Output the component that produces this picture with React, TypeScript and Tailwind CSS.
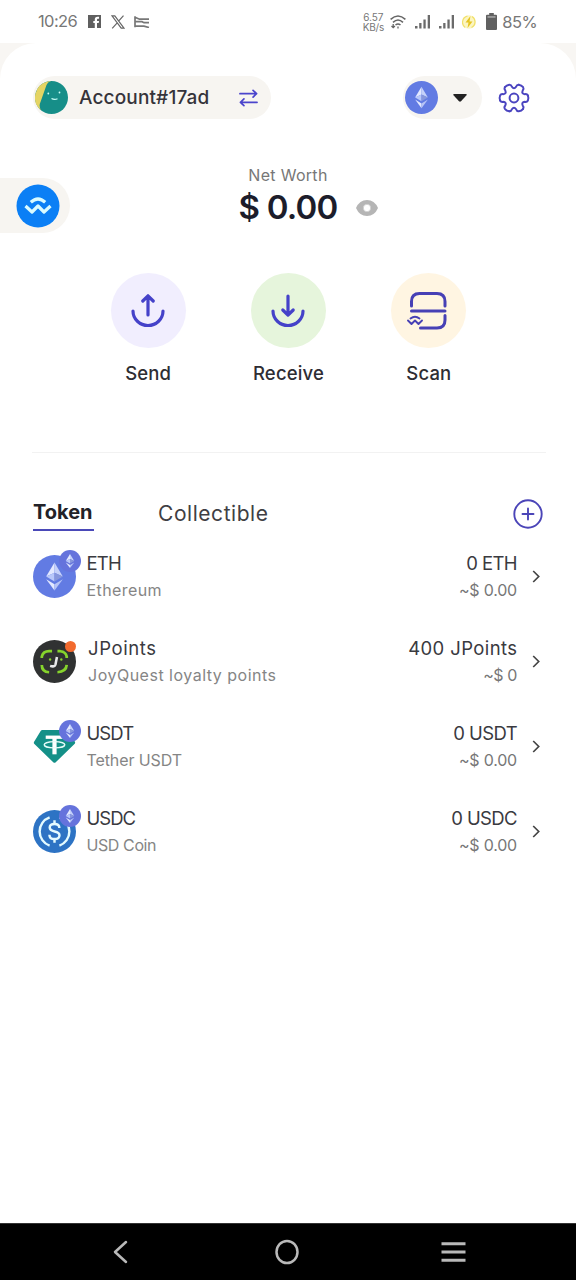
import React from 'react';

interface Token {
  symbol: string;
  name: string;
  amount: string;
  value: string;
  icon: React.ReactNode;
  textClass: string;
  symbolClass: string;
  nameClass: string;
  amountClass: string;
  valueClass: string;
}

// Ethereum diamond, drawn around 0,0 and about 32 units high
const EthDiamond = () => (
  <g>
    <path d="M0-15.500-9.300 0 0-4.200z" fill="#e3e9ff" />
    <path d="M0-15.500 9.300 0 0-4.200z" fill="#c5d1fa" />
    <path d="M-9.300 0 0-4.200V5.600z" fill="#b9c8fa" />
    <path d="M9.300 0 0-4.200V5.600z" fill="#8797dc" />
    <path d="M-9.300 3 0 8.600V15.500z" fill="#e3e9ff" />
    <path d="M9.300 3 0 8.600V15.500z" fill="#b7c4f6" />
  </g>
);

const EthCircle = ({ className, fill = '#627be3' }: { className: string; fill?: string }) => (
  <svg viewBox="-24 -24 48 48" className={className}>
    <circle r="24" fill={fill} />
    <EthDiamond />
  </svg>
);

const EthBadge = () => (
  <EthCircle className="absolute left-[26px] -top-[5px] w-[22px] h-[22px]" fill="#6573dc" />
);

const EthIcon = () => (
  <>
    <EthCircle className="w-[43px] h-[43px]" />
    <EthBadge />
  </>
);

const JPointsIcon = () => (
  <>
    <svg viewBox="0 0 44 44" className="w-[43px] h-[43px]">
      <circle cx="22" cy="22" r="22" fill="#303232" />
      <g fill="none" stroke="#86d42c" strokeWidth="2.800">
        <path d="M9 18.500v-1.500q1.500-5.500 7.500-5.500h3" />
        <path d="M25 11.500h3q5.500.5 6.500 5.500v1.500" />
        <path d="M9 25.500q0 7 7.500 7.500" />
        <path d="M34.500 25.500q-.5 7-9.500 7.500" />
      </g>
      <circle cx="17.500" cy="20" r="1.200" fill="#86d42c" />
      <circle cx="29" cy="20" r="1.200" fill="#86d42c" />
      <path d="M24.500 17.500 23 25q-.7 3-5.500 1.500" fill="none" stroke="#e8e8ea" strokeWidth="2.600" />
    </svg>
    <span className="absolute left-[32px] top-px w-[11px] h-[11px] rounded-full bg-[#f26a2e]" />
  </>
);

const UsdtIcon = () => (
  <>
    <svg viewBox="0 0 44 44" className="w-[43px] h-[43px]">
      <path d="M9.500 5h25q1 0 1.500 1l7 11.500q.5 1-.3 1.800L23 38.300q-1 .9-2 0L1.200 19.300Q.5 18.500 1 17.500L8 6q.5-1 1.500-1z" fill="#149088" />
      <path d="M13 12.500h18" stroke="#fff" strokeWidth="3.400" />
      <path d="M22 12.500v17.500" stroke="#fff" strokeWidth="4.300" />
      <ellipse cx="22" cy="20.200" rx="10.500" ry="3.200" fill="none" stroke="#e6fbf8" strokeWidth="1.500" />
    </svg>
    <EthBadge />
  </>
);

const UsdcIcon = () => (
  <>
    <svg viewBox="0 0 44 44" className="w-[43px] h-[43px]">
      <circle cx="22" cy="22" r="22" fill="#2d73c4" />
      <g fill="none" stroke="#e4fbff" strokeWidth="2.500">
        <path d="M17 7.500A15.400 15.400 0 0 0 17 36.500" />
        <path d="M27 7.500A15.400 15.400 0 0 1 27 36.500" />
        <path d="M27 18.500c0-3-2-4.200-5-4.200s-4.900 1.300-4.900 3.700c0 5.600 10 2.300 10 7.800 0 2.500-2.100 3.900-5.100 3.900s-5.200-1.400-5.200-4.500" />
        <path d="M22 10.500v4M22 29.500v4" />
      </g>
    </svg>
    <EthBadge />
  </>
);

const tokens: Token[] = [
  {
    symbol: 'ETH', name: 'Ethereum', amount: '0 ETH', value: '~$ 0.00', icon: <EthIcon />,
    textClass: 'pl-[10.500px]', symbolClass: 'tracking-[-0.8px]', nameClass: 'tracking-[0.4px]',
    amountClass: 'tracking-[-0.6px]', valueClass: 'tracking-[-0.2px]',
  },
  {
    symbol: 'JPoints', name: 'JoyQuest loyalty points', amount: '400 JPoints', value: '~$ 0', icon: <JPointsIcon />,
    textClass: 'pl-[12px]', symbolClass: 'tracking-[0.6px]', nameClass: 'tracking-[0.5px]',
    amountClass: 'tracking-[0.4px] -mr-[0.500px]', valueClass: 'tracking-[-0.4px]',
  },
  {
    symbol: 'USDT', name: 'Tether USDT', amount: '0 USDT', value: '~$ 0.00', icon: <UsdtIcon />,
    textClass: 'pl-[10.500px]', symbolClass: 'tracking-[-0.9px]', nameClass: 'tracking-[-0.1px]',
    amountClass: 'tracking-[-0.6px]', valueClass: 'tracking-[-0.2px]',
  },
  {
    symbol: 'USDC', name: 'USD Coin', amount: '0 USDC', value: '~$ 0.00', icon: <UsdcIcon />,
    textClass: 'pl-[10.500px]', symbolClass: 'tracking-[-1px]', nameClass: 'tracking-[-0.4px]',
    amountClass: 'tracking-[-0.6px]', valueClass: 'tracking-[-0.2px]',
  },
];

const Signal = ({ className }: { className: string }) => (
  <svg viewBox="0 0 16 14" className={className} fill="#6b6b6b">
    <path d="M0 11h2.500v2.500H0zM4.200 8h2.300v5.500H4.200zM8.400 4.500h2.300v9H8.400zM12.700 0H15v13.500h-2.300z" />
  </svg>
);

const StatusBar = () => (
  <div className="h-[43px] flex items-center pl-[38px] pr-[39px] text-[#777] bg-white">
    <span className="text-[16.500px] leading-none tracking-[-0.6px] w-[50px]">10:26</span>
    <svg viewBox="0 0 14 14" className="w-[13px] h-[13px]">
      <path d="M0 0h14v14H9.700V8.700h1.800l.4-2.200H9.700V5.200c0-.8.3-1.200 1.200-1.200h1V2h-1.700C8.200 2 7.300 3.200 7.300 5v1.500H5.700v2.200h1.600V14H0z" fill="#5f5f5f" />
    </svg>
    <svg viewBox="0 0 14 14" className="ml-[10px] w-[14px] h-[14px]" fill="none" stroke="#666" strokeWidth="1.200">
      <path d="M1 .8h2.800l9.200 12.400h-2.800zM12.500.6 7.800 5.800M6 8.200 1.200 13.400" />
    </svg>
    <svg viewBox="0 0 16 12" className="ml-[9px] w-[16px] h-[12px]" fill="none" stroke="#777" strokeWidth="1.700">
      <path d="M1 .3v11M1 1.200l4.500 2H15M1 5.700h7l2 1h5M1 10.200h9l5 1.300" />
    </svg>
    <div className="ml-auto flex items-center">
      <div className="w-[22px] text-[10px] leading-[10px] text-center">
        <div>6.57</div>
        <div className="tracking-[-0.2px]">KB/s</div>
      </div>
      <svg viewBox="0 0 16 14" className="ml-[6px] w-[16px] h-[14px]" fill="none" stroke="#666" strokeWidth="1.600">
        <path d="M.6 4.300Q8-2.300 15.400 4.300M3 7.300Q8 2.700 13 7.300M5.500 10Q8 8 10.500 10" />
        <path d="M8 11.400v2M3.200 9v3.500M1.500 11l1.700 1.700L4.900 11" strokeWidth="1.300" />
      </svg>
      <Signal className="ml-[9px] w-[16px] h-[14px]" />
      <Signal className="ml-[8px] w-[16px] h-[14px]" />
      <svg viewBox="0 0 14 14" className="ml-[7px] w-[14px] h-[14px]">
        <circle cx="7" cy="7" r="6.800" fill="#fbf5c2" />
        <path d="M3.200 12.500A6.300 6.300 0 0 1 5.500 1.200M10 1.500A6.300 6.300 0 0 1 9.500 12.500" fill="none" stroke="#f1e06a" strokeWidth="1.200" />
        <path d="M8.500 1 3.500 7.600h3L5.500 13l5-6.600h-3z" fill="#e6c420" />
      </svg>
      <svg viewBox="0 0 11 17" className="ml-[10px] w-[11px] h-[17px]" fill="#606060">
        <path d="M3.200 0h4.600v1.700H10q1 0 1 1V16q0 1-1 1H1q-1 0-1-1V2.700q0-1 1-1h2.200z" />
        <path d="M1.500 3.200h8v1.500h-8z" fill="#aaa" />
      </svg>
      <span className="ml-[5px] text-[16.500px] leading-[17px] pt-px tracking-[-0.6px]">85%</span>
    </div>
  </div>
);

// Six identical teeth, one path per 60 degrees
const Gear = () => (
  <svg viewBox="-16 -16 32 32" className="ml-[16px] w-[32px] h-[32px]" fill="none" stroke="#4b45c0" strokeWidth="2" strokeLinecap="round">
    {[0, 60, 120, 180, 240, 300].map((angle) => (
      <path
        key={angle}
        transform={`rotate(${angle})`}
        d="M13.900-2.500Q14.900 0 13.900 2.500Q13 4.300 10.800 3.800Q7.200 4.150 8.690 7.450Q10.220 9.110 9.120 10.790"
      />
    ))}
    <circle r="4.400" />
  </svg>
);

const Header = () => (
  <div className="flex items-center h-[43px] mt-[33px] ml-[33px]">
    <div className="flex items-center w-[238px] h-[43px] rounded-full bg-[#f7f5f1] pl-[2px]">
      <svg viewBox="0 0 33 33" className="w-[33px] h-[33px]">
        <circle cx="16.500" cy="16.500" r="16.500" fill="#168e88" />
        <path d="M12.500.5A16.500 16.500 0 0 0 6 29.200Q3.500 25 5.500 21L11.500 4Q12.500 1 16 0z" fill="#e5d463" />
        <circle cx="13.300" cy="12.500" r=".9" fill="#c9fff8" />
        <circle cx="24.500" cy="11.500" r=".9" fill="#c9fff8" />
        <path d="M16.500 17.500q3 1.700 6 .2" fill="none" stroke="#c9fff8" strokeWidth="1.200" />
      </svg>
      <span className="ml-[11px] w-[160px] text-[19px] font-medium leading-none tracking-[0.15px] text-[#35333a] whitespace-nowrap">Account#17ad</span>
      <svg viewBox="0 0 20 18" className="w-[19px] h-[18px]" fill="none" stroke="#4b45cc" strokeWidth="1.800" strokeLinecap="round" strokeLinejoin="round">
        <path d="M1 4.500h17M14.800 1 18.500 4.500 14.800 8M19 13.500H1.500M5.200 10 1.500 13.500 5.200 17" />
      </svg>
    </div>
    <div className="flex items-center ml-[132px] w-[79px] h-[43px] rounded-full bg-[#f7f5f1] pl-[2px]">
      <EthCircle className="w-[33px] h-[33px]" />
      <svg viewBox="0 0 14 8" className="ml-[15px] w-[14px] h-[8px]" fill="#222">
        <path d="M1 0h12q1.300.5.300 1.600L8 7.300q-1 .9-2 0L.7 1.600Q-.3.500 1 0z" />
      </svg>
    </div>
    <Gear />
  </div>
);

const NetWorth = () => (
  <div className="grid grid-cols-[1fr_120px_1fr] h-[154px]">
    <div className="mt-[59px] flex items-center justify-end pr-[10px] w-[70px] h-[55px] rounded-r-full bg-[#f7f5f1]">
      <svg viewBox="0 0 44 44" className="w-[44px] h-[44px]">
        <circle cx="22" cy="22" r="21.500" fill="#0b7ff5" />
        <path d="M9.500 22 16 28 22 22 28 28 34.500 22M14.800 18.300Q22 11.700 29.200 18.300" fill="none" stroke="#d9fbff" strokeWidth="3.200" strokeLinejoin="round" />
      </svg>
    </div>
    <div className="flex flex-col items-center whitespace-nowrap">
      <div className="mt-[46px] text-[16px] leading-[20px] tracking-[0.3px] text-[#777]">Net Worth</div>
      <div className="mt-[4px] text-[33px] leading-[36px] tracking-[-0.8px] word-spacing font-semibold text-[#1c1d2b]">$ 0.00</div>
    </div>
    <svg viewBox="0 0 22 16" className="mt-[81px] ml-[8px] w-[22px] h-[16px]">
      <path d="M0 8Q3.500 0 11 0t11 8q-3.500 8-11 8T0 8z" fill="#b5b5b5" />
      <circle cx="11" cy="8" r="3.700" fill="#fff" stroke="#c5c5c5" strokeWidth=".6" />
    </svg>
  </div>
);

const Actions = () => (
  <div className="grid grid-cols-3 w-[421px] ml-[78px] h-[179px] text-center text-[18.500px] leading-[24px] tracking-[0.15px] font-medium text-[#2e2d33]">
    <div className="flex flex-col items-center">
      <div className="w-[75px] h-[75px] rounded-full bg-[#f1eefe] flex items-center justify-center">
        <svg viewBox="0 0 34 34" className="w-[34px] h-[34px]" fill="none" stroke="#4542c9" strokeWidth="3.200" strokeLinecap="round" strokeLinejoin="round">
          <path d="M2 17a15 14.500 0 0 0 30 0M17 21V2M11.800 7 17 1.800 22.200 7" />
        </svg>
      </div>
      <span className="mt-[13px]">Send</span>
    </div>
    <div className="flex flex-col items-center">
      <div className="w-[75px] h-[75px] rounded-full bg-[#e6f5dc] flex items-center justify-center">
        <svg viewBox="0 0 34 34" className="w-[34px] h-[34px]" fill="none" stroke="#4542c9" strokeWidth="3.200" strokeLinecap="round" strokeLinejoin="round">
          <path d="M2 17a15 14.500 0 0 0 30 0M17 2V21M11.800 16 17 21.200 22.200 16" />
        </svg>
      </div>
      <span className="mt-[13px]">Receive</span>
    </div>
    <div className="flex flex-col items-center">
      <div className="w-[75px] h-[75px] rounded-full bg-[#fff5e2] flex items-center justify-center">
        <svg viewBox="0 0 42 38" className="mr-[3px] w-[42px] h-[38px]" fill="none" stroke="#4740b5" strokeWidth="3" strokeLinecap="round">
          <path d="M5.500 14V9.500Q5.500 1.500 13.500 1.500H31Q39 1.500 39 9.500V14M5.500 19H39M39 23.500V28Q39 36 31 36H14.500" />
          <path d="M2 28.500 5.500 32 9 28.500 12.500 32 16 28.500M4.500 26.500Q9 22.800 13.500 26.500" strokeWidth="1.900" strokeLinejoin="round" />
        </svg>
      </div>
      <span className="mt-[13px]">Scan</span>
    </div>
  </div>
);

const TokenRow = ({ token }: { token: Token }) => (
  <div className="flex items-center h-[85px] pl-[33px] pr-[36px] whitespace-nowrap">
    <div className="relative w-[43px] h-[43px] shrink-0 mb-px">{token.icon}</div>
    <div className={`flex flex-col ${token.textClass}`}>
      <span className={`text-[18.500px] leading-[27px] text-[#3a3a3f] ${token.symbolClass}`}>{token.symbol}</span>
      <span className={`text-[16px] leading-[27px] text-[#858585] ${token.nameClass}`}>{token.name}</span>
    </div>
    <div className="ml-auto flex flex-col items-end">
      <span className={`text-[18.500px] leading-[27px] text-[#3a3a3f] ${token.amountClass}`}>{token.amount}</span>
      <span className={`text-[16px] leading-[27px] text-[#777] ${token.valueClass}`}>{token.value}</span>
    </div>
    <svg viewBox="0 0 8 13" className="ml-[15px] mb-px w-[8px] h-[13px]" fill="none" stroke="#444" strokeWidth="1.700">
      <path d="M1.200 1 6.700 6.500 1.200 12" />
    </svg>
  </div>
);

const NavBar = () => (
  <div className="h-[57px] bg-black border-t border-[#333] flex items-center justify-between pl-[113px] pr-[110px]">
    <svg viewBox="0 0 15 24" className="w-[15px] h-[24px]" fill="none" stroke="#b9b9b9" strokeWidth="2.500" strokeLinecap="round" strokeLinejoin="round">
      <path d="M13 2 2 12 13 22" />
    </svg>
    <svg viewBox="0 0 24 26" className="w-[24px] h-[26px] ml-[5px]" fill="none" stroke="#b9b9b9" strokeWidth="2.500">
      <ellipse cx="12" cy="13" rx="10.500" ry="11" />
    </svg>
    <svg viewBox="0 0 25 20" className="w-[25px] h-[20px]" fill="none" stroke="#b9b9b9" strokeWidth="3">
      <path d="M.5 1.700h24M.5 10h24M.5 18.300h24" />
    </svg>
  </div>
);

export default function App() {
  return (
    <div className="w-[576px] h-[1280px] flex flex-col overflow-hidden bg-white font-['Inter','Noto_Sans',sans-serif]">
      <StatusBar />
      <div className="flex-1 bg-[#f8f6f3]">
        <div className="h-full flex flex-col bg-white rounded-t-[36px]">
          <Header />
          <NetWorth />
          <Actions />
          <div className="ml-[32px] mr-[30px] h-px bg-[#f2f2f2]" />

          {/* Tabs */}
          <div className="flex items-start h-[81px] pt-[46px] pl-[33px] pr-[33px]">
            <div className="w-[61px] h-[32px] border-b-[2px] border-[#4a49b8] text-[20px] leading-[27px] font-bold text-[#222228] whitespace-nowrap">Token</div>
            <div className="ml-[64px] text-[21px] leading-[30px] tracking-[0.55px] text-[#3f3f44]">Collectible</div>
            <svg viewBox="-15 -15 30 30" className="ml-auto w-[30px] h-[30px]" fill="none" stroke="#4b45b8" strokeWidth="1.900" strokeLinecap="round">
              <circle r="13.700" />
              <path d="M-5.500 0H5.500M0-5.500V5.500" />
            </svg>
          </div>

          {tokens.map((token) => (
            <TokenRow key={token.symbol} token={token} />
          ))}
        </div>
      </div>
      <NavBar />
    </div>
  );
}
